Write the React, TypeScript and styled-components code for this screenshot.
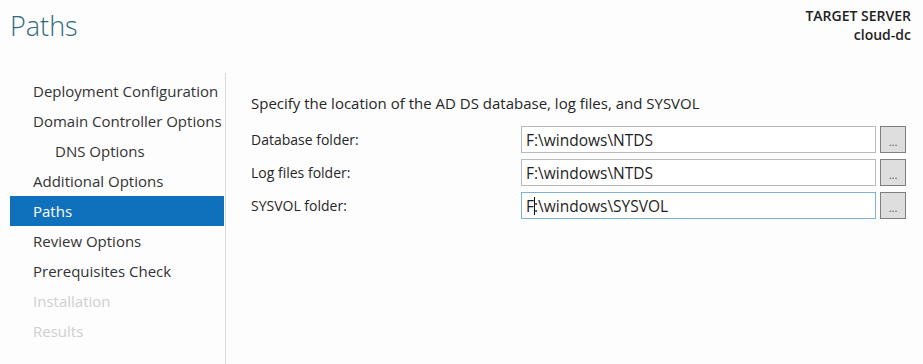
import React from "react";
import styled, { createGlobalStyle } from "styled-components";

const Global = createGlobalStyle`
  html, body { margin: 0; padding: 0; background: #fdfdfd; }
  body { font-family: "Open Sans", "Noto Sans", sans-serif; }
`;

const Page = styled.div`
  width: 923px;
  height: 364px;
  display: flex;
  flex-direction: column;
  background: #fdfdfd;
  overflow: hidden;
`;

const Header = styled.div`
  display: flex;
  justify-content: space-between;
  align-items: flex-start;
  height: 73px;
  padding: 0 12px 0 10px;
  box-sizing: border-box;
`;

const Title = styled.h1`
  margin: 0;
  padding-top: 6px;
  font-family: "Open Sans", sans-serif;
  font-weight: 300;
  font-size: 27px;
  line-height: 40px;
  color: #2f6b80;
`;

const Server = styled.div`
  padding-top: 6px;
  text-align: right;
  font-size: 14px;
  line-height: 19px;
  font-weight: 600;
  color: #222;
`;

const Body = styled.div`
  flex: 1;
  display: flex;
`;

const Sidebar = styled.nav`
  width: 215px;
  margin-left: 10px;
  padding-top: 3px;
  border-right: 1px solid #d8d8d8;
  display: flex;
  flex-direction: column;
`;

const NavItem = styled.div<{ $active?: boolean; $disabled?: boolean; $indent?: boolean }>`
  height: 30px;
  margin-right: 1px;
  display: flex;
  align-items: center;
  padding-left: ${(p) => (p.$indent ? 45 : 23)}px;
  font-size: 15px;
  white-space: nowrap;
  color: ${(p) => (p.$active ? "#ffffff" : p.$disabled ? "#cfcfcf" : "#333333")};
  background: ${(p) => (p.$active ? "#0f70bc" : "transparent")};
`;

const Content = styled.div`
  padding: 18px 0 0 25px;
  display: flex;
  flex-direction: column;
`;

const Intro = styled.div`
  font-size: 15px;
  line-height: 24px;
  color: #262626;
  margin-bottom: 11px;
`;

const Form = styled.div`
  display: grid;
  grid-template-columns: 266px 355px 26px;
  column-gap: 4px;
  row-gap: 6px;
  align-items: center;
`;

const Label = styled.label`
  font-size: 14px;
  color: #262626;
`;

const Field = styled.div<{ $focused?: boolean }>`
  height: 27px;
  box-sizing: border-box;
  border: 1px solid ${(p) => (p.$focused ? "#7fb2dc" : "#b9b9b9")};
  background: #fff;
  display: flex;
  align-items: center;
  padding-left: 4px;
  font-size: 15.5px;
  color: #1e1e1e;
`;

const Caret = styled.span`
  display: inline-block;
  width: 1px;
  height: 18px;
  background: #111;
  margin: 0 -1px 0 0;
`;

const Browse = styled.button`
  height: 27px;
  width: 26px;
  box-sizing: border-box;
  border: 1px solid #7f7f7f;
  background: #dedede;
  color: #555;
  font-size: 11px;
  padding: 4px 0 0;
  font-family: inherit;
  line-height: 1;
`;

const nav = [
  { label: "Deployment Configuration" },
  { label: "Domain Controller Options" },
  { label: "DNS Options", indent: true },
  { label: "Additional Options" },
  { label: "Paths", active: true },
  { label: "Review Options" },
  { label: "Prerequisites Check" },
  { label: "Installation", disabled: true },
  { label: "Results", disabled: true },
];

export default function App() {
  return (
    <Page>
      <Global />
      <Header>
        <Title>Paths</Title>
        <Server>
          <div>TARGET SERVER</div>
          <div>cloud-dc</div>
        </Server>
      </Header>
      <Body>
        <Sidebar>
          {nav.map((n) => (
            <NavItem key={n.label} $active={n.active} $disabled={n.disabled} $indent={n.indent}>
              {n.label}
            </NavItem>
          ))}
        </Sidebar>
        <Content>
          <Intro>Specify the location of the AD DS database, log files, and SYSVOL</Intro>
          <Form>
            <Label>Database folder:</Label>
            <Field>F:\windows\NTDS</Field>
            <Browse>...</Browse>
            <Label>Log files folder:</Label>
            <Field>F:\windows\NTDS</Field>
            <Browse>...</Browse>
            <Label>SYSVOL folder:</Label>
            <Field $focused>
              F<Caret />:\windows\SYSVOL
            </Field>
            <Browse>...</Browse>
          </Form>
        </Content>
      </Body>
    </Page>
  );
}
